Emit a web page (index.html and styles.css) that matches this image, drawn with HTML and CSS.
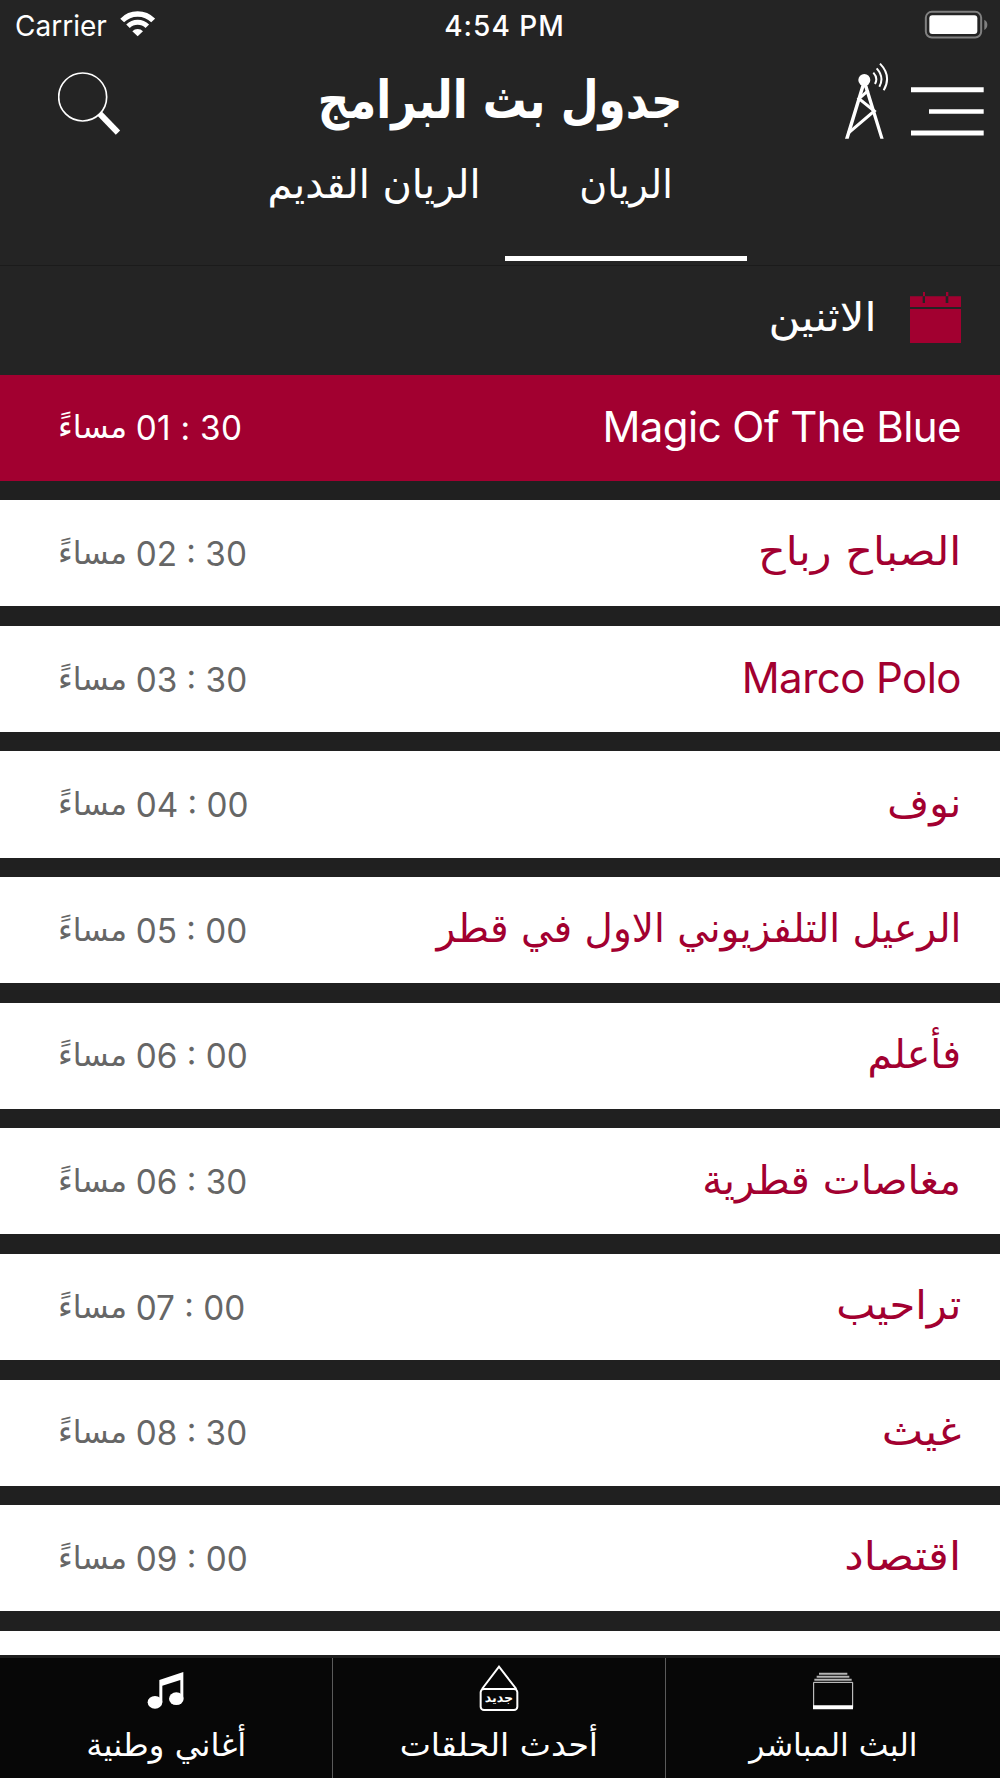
FILE: index.html
```
<!DOCTYPE html>
<html lang="ar" dir="rtl">
<head>
<meta charset="utf-8">
<title>جدول بث البرامج</title>
<link rel="stylesheet" href="styles.css">
</head>
<body>
<div class="screen">
  <div class="status" dir="ltr">
    <div class="carrier">
      <span>Carrier</span>
      <svg class="wifi" viewBox="360 33 106 78" fill="none" stroke="#fff">
        <path d="M366.500 61.500A65 65 0 0 1 459.500 61.500" stroke-width="16"/>
        <path d="M384 79A41 41 0 0 1 442 79" stroke-width="15"/>
        <path d="M413 109L397 94A22 22 0 0 1 429 94Z" fill="#fff" stroke="none"/>
      </svg>
    </div>
    <span class="clock">4:54 PM</span>
    <svg class="battery" viewBox="1270 25 200 100">
      <rect x="1278.500" y="33.500" width="166" height="77" rx="18" fill="none" stroke="#808080" stroke-width="6"/>
      <rect x="1289" y="44" width="144" height="56" rx="9" fill="#fff"/>
      <path d="M1454 57Q1463 62 1463 72.500T1454 88Z" fill="#808080"/>
    </svg>
  </div>

  <header class="nav">
    <div class="nav-actions">
      <svg class="menu" viewBox="0 0 218 146" fill="#fff">
        <path d="M0 0h218v15H0zM54 66h164v14H54zM0 130h218v15H0z"/>
      </svg>
      <svg class="antenna" viewBox="60 30 150 240" fill="none" stroke="#fff">
        <circle cx="130" cy="90" r="18" fill="#fff" stroke="none"/>
        <path d="M122 103h16L188 266h-10L130 112 83 266H72Z" fill="#fff" stroke="none"/>
        <path d="M142 121L114 146L160 183L81 250" stroke-width="9"/>
        <path d="M157 68Q172 84 162 102M167 55Q191 82 175 110M177 41Q213 78 188 121" stroke-width="6"/>
      </svg>
    </div>
    <h1 class="title">جدول بث البرامج</h1>
    <svg class="search" viewBox="174 216 189 190" fill="none" stroke="#fff">
      <circle cx="248" cy="291" r="72" stroke-width="5"/>
      <path d="M299 341L354 398" stroke-width="18"/>
    </svg>
  </header>

  <nav class="tabs">
    <a class="tab active"><span>الريان</span></a>
    <a class="tab"><span>الريان القديم</span></a>
  </nav>

  <div class="day">
    <svg class="calendar" viewBox="1231 96 153 153">
      <path d="M1231 109h153v140h-153z" fill="#a20030"/>
      <path d="M1231 141h153v6h-153zM1269 109h7v20h-7zM1338 109h8v20h-8z" fill="#242424"/>
      <path d="M1270 96h6v12h-6zM1339 96h7v12h-7z" fill="#a20030"/>
    </svg>
    <span class="day-name">الاثنين</span>
  </div>

  <main class="list">
    <article class="row current"><span class="name latin" dir="ltr">Magic Of The Blue</span><div class="time"><span class="period">مساءً</span><span>01 : 30</span></div></article>
    <article class="row"><span class="name">الصباح رباح</span><div class="time"><span class="period">مساءً</span><span>02 : 30</span></div></article>
    <article class="row"><span class="name latin" dir="ltr">Marco Polo</span><div class="time"><span class="period">مساءً</span><span>03 : 30</span></div></article>
    <article class="row"><span class="name">نوف</span><div class="time"><span class="period">مساءً</span><span>04 : 00</span></div></article>
    <article class="row"><span class="name">الرعيل التلفزيوني الاول في قطر</span><div class="time"><span class="period">مساءً</span><span>05 : 00</span></div></article>
    <article class="row"><span class="name">فأعلم</span><div class="time"><span class="period">مساءً</span><span>06 : 00</span></div></article>
    <article class="row"><span class="name">مغاصات قطرية</span><div class="time"><span class="period">مساءً</span><span>06 : 30</span></div></article>
    <article class="row"><span class="name">تراحيب</span><div class="time"><span class="period">مساءً</span><span>07 : 00</span></div></article>
    <article class="row"><span class="name">غيث</span><div class="time"><span class="period">مساءً</span><span>08 : 30</span></div></article>
    <article class="row"><span class="name">اقتصاد</span><div class="time"><span class="period">مساءً</span><span>09 : 00</span></div></article>
    <article class="row"></article>
  </main>

  <footer class="bar">
    <a class="item">
      <svg viewBox="9 9 180 150">
        <path d="M57 38h85v6H57zM50 47h98v6H50zM43 56h112v6H43z" fill="#b4b4b4"/>
        <path d="M41 67h117v76H41z" fill="none" stroke="#ddd" stroke-width="3"/>
        <path d="M39 136h120v12H39z" fill="#fff"/>
      </svg>
      <span>البث المباشر</span>
    </a>
    <a class="item">
      <svg viewBox="0 39 180 150">
        <g fill="none" stroke="#fff" stroke-width="6">
          <path d="M39 117L90 50L142 117"/>
          <rect x="35" y="117" width="110" height="63" rx="10"/>
        </g>
        <text class="badge" x="90" y="155">جديد</text>
      </svg>
      <span>أحدث الحلقات</span>
    </a>
    <a class="item">
      <svg viewBox="-9 9 180 150" fill="#fff">
        <path d="M61 60L133 36V115H124V60L70 77V126H61Z"/>
        <ellipse cx="48" cy="127" rx="22" ry="19"/>
        <ellipse cx="112" cy="116" rx="22" ry="19"/>
      </svg>
      <span>أغاني وطنية</span>
    </a>
  </footer>
</div>
</body>
</html>
```
FILE: styles.css
```
* { box-sizing: border-box; }
body { margin: 0; background: #242424; }
svg { display: block; flex: none; }

.screen {
  display: flex;
  flex-direction: column;
  width: 1000px;
  height: 1778px;
  overflow: hidden;
  color: #fff;
  font-family: "DejaVu Sans", sans-serif;
  font-size: 40px;
  white-space: nowrap;
}

.status {
  display: grid;
  grid-template-columns: 1fr auto 1fr;
  align-items: center;
  height: 51px;
  padding: 0 10px 0 15px;
  font-family: Inter, sans-serif;
  font-size: 28px;
}
.carrier { display: flex; align-items: center; gap: 13px; }
.wifi { width: 35.300px; height: 26px; margin-bottom: 3px; }
.clock { font-weight: 500; letter-spacing: 1px; padding-left: 4px; }
.battery { width: 66.670px; height: 33.330px; justify-self: end; }

.nav {
  display: grid;
  grid-template-columns: 230px 1fr 230px;
  align-items: center;
  height: 97px;
}
.nav-actions { display: flex; align-items: flex-end; gap: 20px; padding-right: 16.500px; }
.menu { width: 72.700px; height: 49px; margin-bottom: 4px; }
.antenna { width: 50px; height: 80px; }
.title {
  margin: 0;
  padding-top: 2px;
  font-size: 52px;
  line-height: 95px;
  font-weight: 700;
  justify-self: center;
  transform: scaleX(.84);
}
.search { width: 63px; height: 63.300px; justify-self: end; margin: 8px 0 0 58px; }

.tabs {
  display: flex;
  gap: 10px;
  height: 118px;
  padding-right: 253px;
  border-bottom: 1px solid #1b1b1b;
}
.tab {
  width: 242px;
  height: 113px;
  line-height: 73px;
  text-align: center;
  border-bottom: 5px solid transparent;
}
.tab.active { border-color: #fff; }
.tab span { display: inline-block; }
.tab.active span { transform: scaleX(.952); }

.day {
  display: flex;
  align-items: center;
  gap: 33px;
  height: 108.500px;
  padding: 0 39px 6px 0;
}
.calendar { width: 51px; height: 51px; margin-top: 1px; }
.day-name { transform: scaleX(1.085); transform-origin: right; }

.list { flex: 1; min-height: 0; overflow: hidden; background: #202020; }
.row {
  display: flex;
  align-items: center;
  justify-content: space-between;
  height: 106.200px;
  margin-bottom: 19.440px;
  padding: 0 39px 0 58px;
  background: #fff;
  color: #a20030;
}
.row.current { background: #a20030; color: #fff; }
.name { padding-bottom: 3.600px; transform-origin: right; }
.name.latin { font-family: Inter, sans-serif; font-size: 42px; letter-spacing: -.55px; padding-bottom: 2px; }
.row:nth-child(2) .name { transform: scaleX(1.074); }
.row:nth-child(4) .name { transform: scaleX(1.01); }
.row:nth-child(5) .name { transform: scaleX(.975); }
.row:nth-child(6) .name { transform: scaleX(.985); }
.row:nth-child(7) .name { transform: scaleX(1.011); }
.row:nth-child(8) .name { transform: scaleX(1.04); }
.row:nth-child(9) .name { transform: scaleX(1.1); }
.row:nth-child(10) .name { transform: scaleX(1.09); }

.time {
  display: flex;
  direction: ltr;
  align-items: center;
  padding-top: 1.500px;
  font-family: Inter, sans-serif;
  font-size: 33.300px;
  color: #666;
}
.current .time { color: #fff; letter-spacing: .3px; }
.period {
  width: 77.700px;
  padding-bottom: 2px;
  font-family: "DejaVu Sans", sans-serif;
  font-size: 32px;
  letter-spacing: 0;
  transform: scaleX(.98);
  transform-origin: left;
}

.bar {
  display: grid;
  grid-template-columns: 334px 333px 333px;
  height: 123px;
  border-top: 3px solid #1e1e1e;
  background: #070707;
  font-size: 32px;
}
.item { display: flex; flex-direction: column; align-items: center; padding-top: 5px; }
.item + .item { border-right: 1px solid #5a5a5a; }
.item svg { width: 60px; height: 50px; }
.item span { line-height: 65px; }
.item:nth-child(1) span { transform: scaleX(.985); }
.item:nth-child(2) span { transform: scaleX(1.035); }
.item:nth-child(3) span { transform: scaleX(1.01); }
.badge { font-size: 38px; font-weight: 700; fill: #fff; text-anchor: middle; }
```
